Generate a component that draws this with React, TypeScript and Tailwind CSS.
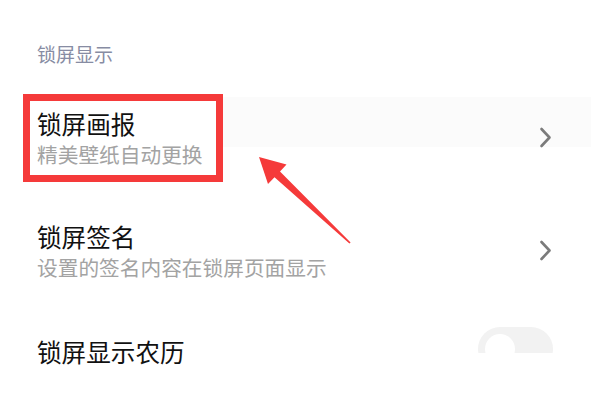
import React from 'react';

const font = { fontFamily: '"Noto Sans CJK SC", "Noto Sans", sans-serif' };

function Chevron() {
  return (
    <svg width="13" height="21" viewBox="0 0 13 21" className="shrink-0">
      <path d="M2.5 2 L10.5 10.5 L2.5 19" fill="none" stroke="#7b7b7b" strokeWidth="2.6" strokeLinecap="round" strokeLinejoin="round" />
    </svg>
  );
}

function Toggle() {
  // the screenshot cuts the switch off halfway down
  return (
    <div className="h-[48px] w-[75px] shrink-0">
      <div className="h-[26px] overflow-hidden">
        <div className="relative h-[44px] w-[75px] rounded-full bg-[#f2f2f2]">
          <div className="absolute left-[7px] top-[7px] h-[30px] w-[30px] rounded-full bg-white" />
        </div>
      </div>
    </div>
  );
}

export default function App() {
  return (
    <div className="relative h-[420px] w-[591px] overflow-hidden bg-white" style={font}>
      <div className="pt-[44px] pl-[37px] pr-[38px]">
        <div className="text-[19px] leading-[19px] text-[#878ca3]">锁屏显示</div>
      </div>

      <div className="mt-[18px] flex flex-col">
        {/* 锁屏画报 */}
        <div className="relative flex items-center justify-between py-[30px] pl-[37px] pr-[39px]">
          <div className="absolute left-[222px] right-0 top-[16px] h-[50px] bg-[#fbfbfb]" />
          <div className="relative">
            <div className="text-[24.6px] leading-[24px] text-[#111]">锁屏画报</div>
            <div className="mt-[9px] text-[20.7px] leading-[20px] text-[#a3a3a3]">精美壁纸自动更换</div>
            <div className="absolute left-[-14px] top-[-17px] h-[88px] w-[200px] border-[7px] border-[#f53a3a]" />
          </div>
          <div className="relative">
            <Chevron />
          </div>
        </div>

        {/* 锁屏签名 */}
        <div className="flex items-center justify-between py-[30px] pl-[37px] pr-[39px]">
          <div>
            <div className="text-[24.6px] leading-[24px] text-[#111]">锁屏签名</div>
            <div className="mt-[9px] text-[20.7px] leading-[20px] text-[#a3a3a3]">设置的签名内容在锁屏页面显示</div>
          </div>
          <Chevron />
        </div>

        {/* 锁屏显示农历 */}
        <div className="flex items-center justify-between py-[20px] pl-[37px] pr-[38px]">
          <div className="text-[24.6px] leading-[24px] text-[#111]">锁屏显示农历</div>
          <Toggle />
        </div>
      </div>

      <svg className="pointer-events-none absolute left-0 top-0" width="591" height="420">
        <polygon
          points="259,157 286.5,164.5 280,171.5 350.6,242.6 349.4,243.4 274.5,177.3 268,184 "
          fill="#f53a3a"
        />
      </svg>
    </div>
  );
}
